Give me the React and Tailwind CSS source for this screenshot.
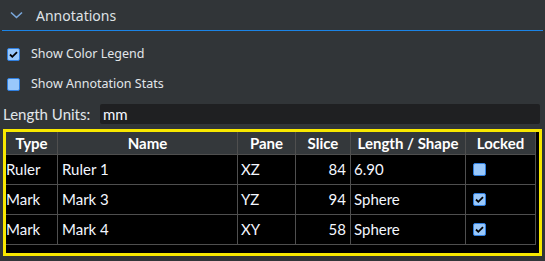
import React from "react";

function Check({ checked }) {
  return (
    <div className="w-[13px] h-[13px] rounded-[2px] border border-[#2f7fe0] bg-[#99c8fb] flex items-center justify-center">
      {checked && (
        <svg width="11" height="11" viewBox="0 0 11 11">
          <path d="M2 5.5 L4.3 7.8 L9 3.2" fill="none" stroke="#000" strokeWidth="1.8" />
        </svg>
      )}
    </div>
  );
}

const rows = [
  { type: "Ruler", name: "Ruler 1", pane: "XZ", slice: "84", ls: "6.90", locked: false },
  { type: "Mark", name: "Mark 3", pane: "YZ", slice: "94", ls: "Sphere", locked: true },
  { type: "Mark", name: "Mark 4", pane: "XY", slice: "58", ls: "Sphere", locked: true },
];

const cell = "h-[30px] border-r border-b border-[#4f4f4f] flex items-center text-[15px] text-[#f4f7ff]";
const head = "h-[23px] border-r border-b border-[#4f4f4f] flex items-center justify-center text-[15px] font-bold text-white bg-[#34383b]";

export default function App() {
  return (
    <div className="w-[545px] h-[261px] bg-[#313538] overflow-hidden" style={{ fontFamily: "'Noto Sans', sans-serif" }}>
      <div className="h-[30px] flex items-center pl-[10px]">
        <svg width="13" height="8" viewBox="0 0 13 8">
          <path d="M1 1.5 L6.5 6.5 L12 1.5" fill="none" stroke="#7aa8dc" strokeWidth="1.6" />
        </svg>
        <span className="ml-[13px] text-[14px] text-[#dfe2e6]">Annotations</span>
      </div>
      <div className="mx-[2px] h-px bg-[#1b84e6]" />
      <div className="mt-[8px] h-[30px] flex items-center pl-[7px]">
        <Check checked />
        <span className="ml-[11px] text-[12.5px] text-[#e2e6ea]">Show Color Legend</span>
      </div>
      <div className="h-[30px] flex items-center pl-[7px]">
        <Check />
        <span className="ml-[11px] text-[12.5px] text-[#e2e6ea]">Show Annotation Stats</span>
      </div>
      <div className="mt-[5px] h-[20px] flex items-center" style={{ fontFamily: "Lato, sans-serif" }}>
        <span className="pl-[3px] w-[100px] text-[15px] text-[#e2e6ea]">Length Units:</span>
        <div className="w-[440px] h-[20px] rounded-[2px] bg-[#1f2022] flex items-center pl-[3px] text-[15px] text-[#f4f7ff]">mm</div>
      </div>
      <div
        className="mt-[5px] mx-[3px] h-[127px] border-[3px] border-[#f8e800] bg-black"
        style={{ fontFamily: "Lato, sans-serif" }}
      >
        <div className="grid grid-cols-[52px_180px_58px_55px_115px_70px] w-[530px]">
          <div className={head}>Type</div>
          <div className={head}>Name</div>
          <div className={head}>Pane</div>
          <div className={head}>Slice</div>
          <div className={head}>Length / Shape</div>
          <div className={head}>Locked</div>
          {rows.map((r, i) => (
            <React.Fragment key={i}>
              <div className={cell}>{r.type}</div>
              <div className={cell + " pl-[4px]"}>{r.name}</div>
              <div className={cell + " pl-[3px]"}>{r.pane}</div>
              <div className={cell + " justify-end pr-[4px]"}>{r.slice}</div>
              <div className={cell + " pl-[3px]"}>{r.ls}</div>
              <div className={cell + " pl-[7px]"}>
                <Check checked={r.locked} />
              </div>
            </React.Fragment>
          ))}
        </div>
      </div>
    </div>
  );
}
